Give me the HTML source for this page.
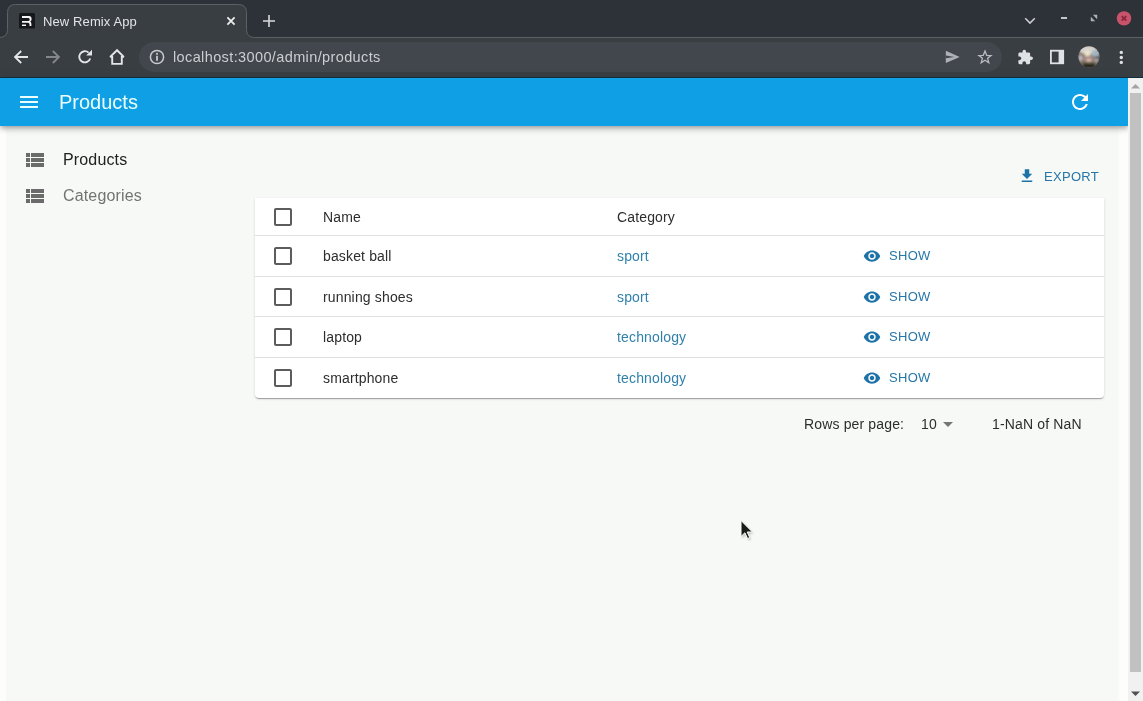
<!DOCTYPE html>
<html><head><meta charset="utf-8">
<style>
*{box-sizing:border-box;margin:0;padding:0}
html,body{-webkit-font-smoothing:antialiased;width:1143px;height:701px;overflow:hidden;background:#f7f9f7;font-family:"Liberation Sans",sans-serif}
.a{position:absolute;will-change:transform}
svg{display:block;overflow:visible}
#tabstrip{left:0;top:0;width:1143px;height:38px;background:#2c3238}
#tab{left:7px;top:4px;width:240px;height:40px;background:#393e43;border:1px solid #5c6166;border-radius:8px 8px 0 0;border-bottom:none}
#toolbar{left:0;top:38px;width:1143px;height:39px;background:#393e43}
#sep{left:0;top:77px;width:1143px;height:1px;background:#12303f}
#omni{left:139px;top:42px;width:863px;height:30px;border-radius:15px;background:#41474c}
.ctext{color:#e3e4e6;font-size:13px;white-space:nowrap}
#appbar{left:0;top:78px;width:1128px;height:48px;background:#0e9fe4;box-shadow:0 2px 4px -1px rgba(0,0,0,.2),0 4px 5px 0 rgba(0,0,0,.14),0 1px 10px 0 rgba(0,0,0,.12)}
#main{left:0;top:78px;width:1128px;height:623px;background:#f7f9f7}
#leftstrip{left:0;top:126px;width:6px;height:575px;background:#fdfdfc}
#rightstrip{left:1117px;top:126px;width:11px;height:575px;background:linear-gradient(90deg,#f7f9f7,#fdfdfc 3px)}
#scroll{left:1128px;top:78px;width:15px;height:623px;background:#f1f1f1}
#thumb{left:1130px;top:93px;width:11px;height:579px;background:#c1c1c1}
.menu{font-size:16px;letter-spacing:.15px;white-space:nowrap}
#card{left:255px;top:198px;width:849px;height:200px;background:#fff;border-radius:0 0 4px 4px;box-shadow:0 2px 1px -1px rgba(0,0,0,.2),0 1px 1px 0 rgba(0,0,0,.14),0 1px 3px 0 rgba(0,0,0,.12)}
.hr{left:255px;width:849px;height:1px;background:#e0e0e0}
.cell{font-size:14px;letter-spacing:.15px;color:#2d2d2d;white-space:nowrap}
.link{font-size:14px;letter-spacing:.15px;color:#3080ac;white-space:nowrap}
.btn{font-size:13px;color:#2576a8;letter-spacing:.3px;white-space:nowrap}
.cb{width:24px;height:24px}
</style></head><body>
<div id="tabstrip" class="a"></div>
<div id="toolbar" class="a"></div>
<svg class="a" style="left:0;top:0" width="1143" height="39" viewBox="0 0 1143 39"><path d="M-1 37.5 Q7.5 37.5 7.5 29.5 V12.5 Q7.5 4.5 15.5 4.5 H238.5 Q246.5 4.5 246.5 12.5 V29.5 Q246.5 37.5 254.5 37.5 H1144 V40 H-1Z" fill="#393e43"/><path d="M-1 37.5 Q7.5 37.5 7.5 29.5 V12.5 Q7.5 4.5 15.5 4.5 H238.5 Q246.5 4.5 246.5 12.5 V29.5 Q246.5 37.5 254.5 37.5 H1144" fill="none" stroke="#5c6166" stroke-width="1"/></svg>
<div id="sep" class="a"></div>
<div id="omni" class="a"></div>
<!-- favicon -->
<svg class="a" style="left:19px;top:13px" width="16" height="16" viewBox="0 0 16 16"><rect x="0" y="0" width="16" height="15.5" rx="1.5" fill="#15171b"/><path d="M3 3H10Q12.6 3 12.6 5.9Q12.6 7.9 11.2 8.6Q12.4 9.3 12.4 11V12.9H10.5V11.2Q10.5 9.7 9 9.7H3V8H9.6Q10.7 8 10.7 6.6Q10.7 4.9 9.5 4.9H3Z M3 11.6H7V13.1H3Z" fill="#f4f4f4"/></svg>
<div class="a ctext" style="left:43px;top:14px;letter-spacing:.11px">New Remix App</div>
<!-- tab close -->
<svg class="a" style="left:225px;top:15px" width="12" height="12" viewBox="0 0 12 12"><path d="M2.4 2.4L9.6 9.6M9.6 2.4L2.4 9.6" stroke="#eceef0" stroke-width="1.8"/></svg>
<!-- new tab plus -->
<svg class="a" style="left:262px;top:14px" width="14" height="14" viewBox="0 0 14 14"><path d="M7 1V13M1 7H13" stroke="#d8dadd" stroke-width="1.6"/></svg>
<!-- window controls -->
<svg class="a" style="left:1024px;top:17px" width="12" height="8" viewBox="0 0 12 8"><path d="M1.2 1.2L6 6L10.8 1.2" fill="none" stroke="#c9cbcf" stroke-width="1.6"/></svg>
<div class="a" style="left:1061px;top:17px;width:6px;height:2px;background:#c4c6ca"></div>
<svg class="a" style="left:1090px;top:14px" width="8" height="8" viewBox="0 0 8 8"><path d="M2.8 0.8H7.2V5.2Z M0.8 2.8V7.2H5.2Z" fill="#aeb1b6"/></svg>
<svg class="a" style="left:1116px;top:11px" width="16" height="16" viewBox="0 0 16 16"><circle cx="8" cy="7.4" r="7.2" fill="#c9536b"/><path d="M5.7 5.1L10.3 9.7M10.3 5.1L5.7 9.7" stroke="#84283b" stroke-width="1.7"/></svg>
<!-- nav icons -->
<svg class="a" style="left:13px;top:49px" width="16" height="16" viewBox="0 0 16 16"><path d="M15 8H2.5M8.2 2L2 8L8.2 14" fill="none" stroke="#e4e6e8" stroke-width="1.8"/></svg>
<svg class="a" style="left:45px;top:49px" width="16" height="16" viewBox="0 0 16 16"><path d="M1 8H13.5M7.8 2L14 8L7.8 14" fill="none" stroke="#84878d" stroke-width="1.8"/></svg>
<svg class="a" style="left:77px;top:49px" width="16" height="16" viewBox="0 0 16 16"><path d="M13.2 9.5A5.6 5.6 0 1 1 11.6 3.6" fill="none" stroke="#e4e6e8" stroke-width="1.9"/><path d="M9.2 6.5H15V0.8Z" fill="#e4e6e8"/></svg>
<svg class="a" style="left:109px;top:48px" width="17" height="17" viewBox="0 0 17 17"><path d="M8 2.2L1.2 8.9H3.2V15.9H12.8V8.9H14.8Z" fill="none" stroke="#e4e6e8" stroke-width="1.9" stroke-linejoin="miter" stroke-miterlimit="2"/></svg>
<!-- info -->
<svg class="a" style="left:149px;top:49px" width="16" height="16" viewBox="0 0 16 16"><circle cx="8" cy="8" r="6.6" fill="none" stroke="#c8cacd" stroke-width="1.5"/><rect x="7.1" y="6.8" width="1.8" height="5" fill="#c8cacd"/><rect x="7.1" y="3.9" width="1.8" height="1.8" fill="#c8cacd"/></svg>
<div class="a ctext" style="left:173px;top:49px;color:#ccced2;font-size:14.5px;letter-spacing:.38px">localhost:3000/admin/products</div>
<!-- send -->
<svg class="a" style="left:944px;top:49px" width="16" height="16" viewBox="0 0 16 16"><path d="M1.8 1.8L15.7 7.9L1.8 14Z" fill="#aeb1b6"/><path d="M1.8 6.5L10.5 7.9L1.8 9.3Z" fill="#41474c"/></svg>
<!-- star -->
<svg class="a" style="left:977px;top:49px" width="16" height="16" viewBox="0 0 16 16"><path d="M8 2.1L9.7 6.3L14.1 6.5L10.6 9.3L11.8 13.7L8 11.2L4.2 13.7L5.4 9.3L1.9 6.5L6.3 6.3Z" fill="none" stroke="#b8bbbf" stroke-width="1.3" stroke-linejoin="miter"/></svg>
<!-- puzzle -->
<svg class="a" style="left:1017.1px;top:49.3px" width="16.6" height="16.6" viewBox="0 0 24 24"><path d="M20.5 11H19V7c0-1.1-.9-2-2-2h-4V3.5C13 2.120 11.88 1 10.5 1S8 2.12 8 3.5V5H4c-1.1 0-1.99.9-1.99 2v3.8H3.5c1.49 0 2.7 1.21 2.7 2.7s-1.21 2.7-2.7 2.7H2V20c0 1.1.9 2 2 2h3.8v-1.5c0-1.49 1.21-2.7 2.7-2.7 1.49 0 2.7 1.21 2.7 2.7V22H17c1.1 0 2-.9 2-2v-4h1.5c1.38 0 2.5-1.12 2.5-2.5S21.88 11 20.5 11z" fill="#dfe1e4"/></svg>
<!-- sidebar -->
<svg class="a" style="left:1049px;top:49px" width="16" height="16" viewBox="0 0 16 16"><rect x="1.9" y="1.7" width="12.3" height="12.6" fill="none" stroke="#e0e2e5" stroke-width="1.8"/><rect x="9.6" y="1.7" width="5.2" height="12.6" fill="#e0e2e5"/></svg>
<!-- avatar -->
<svg class="a" style="left:1078px;top:46px" width="22" height="22" viewBox="0 0 22 22"><defs><clipPath id="avc"><circle cx="11" cy="10.8" r="10.6"/></clipPath><filter id="avb" x="-20%" y="-20%" width="140%" height="140%"><feGaussianBlur stdDeviation="0.9"/></filter></defs><g clip-path="url(#avc)"><rect width="22" height="22" fill="#857366"/><g filter="url(#avb)"><ellipse cx="10" cy="4" rx="9" ry="4.5" fill="#d6d3cf"/><ellipse cx="9.5" cy="7.5" rx="3" ry="3.5" fill="#e8e2c8"/><ellipse cx="17.5" cy="7.5" rx="4" ry="3.5" fill="#a3b5c4"/><rect x="17" y="10.5" width="6" height="1.5" fill="#27313c"/><ellipse cx="2.5" cy="12" rx="2.2" ry="3" fill="#b9b6c2"/><ellipse cx="10" cy="12.5" rx="5" ry="2.5" fill="#a78a84"/><ellipse cx="11" cy="14.3" rx="3" ry="1.2" fill="#e7c4b8"/><ellipse cx="18" cy="14.5" rx="2" ry="2.5" fill="#a2a3a8"/><rect x="2" y="16" width="18" height="2.5" fill="#6f6a55"/><rect x="5" y="17.5" width="12" height="5" fill="#2c281e"/></g></g></svg>
<!-- kebab -->
<svg class="a" style="left:1118px;top:49px" width="6" height="16" viewBox="0 0 6 16"><circle cx="3.3" cy="3.4" r="1.7" fill="#e0e2e5"/><circle cx="3.3" cy="8.5" r="1.7" fill="#e0e2e5"/><circle cx="3.3" cy="13.4" r="1.7" fill="#e0e2e5"/></svg>

<div id="main" class="a"></div>
<div id="leftstrip" class="a"></div>
<div id="rightstrip" class="a"></div>
<div id="appbar" class="a"></div>
<svg class="a" style="left:17px;top:90px" width="24" height="24" viewBox="0 0 24 24"><path d="M3 18h18v-2H3v2zm0-5h18v-2H3v2zm0-7v2h18V6H3z" fill="#ecffff"/></svg>
<div class="a" style="left:58.6px;top:91px;font-size:20px;color:#ecffff;white-space:nowrap">Products</div>
<svg class="a" style="left:1068px;top:90px" width="24" height="24" viewBox="0 0 24 24"><path d="M17.65 6.35C16.2 4.9 14.21 4 12 4c-4.42 0-7.99 3.58-7.99 8s3.57 8 7.99 8c3.73 0 6.84-2.55 7.730-6h-2.08c-.82 2.33-3.04 4-5.65 4-3.31 0-6-2.69-6-6s2.690-6 6-6c1.66 0 3.14.69 4.22 1.78L13 11h7V4l-2.35 2.35z" fill="#fff"/></svg>
<div id="scroll" class="a"></div>
<div id="thumb" class="a"></div>
<svg class="a" style="left:1130px;top:82px" width="11" height="8" viewBox="0 0 11 8"><path d="M1 6.5L5.5 2L10 6.5Z" fill="#a3a3a3"/></svg>
<svg class="a" style="left:1130px;top:690px" width="11" height="8" viewBox="0 0 11 8"><path d="M1 1.5L5.5 6L10 1.5Z" fill="#505050"/></svg>

<svg class="a" style="left:22px;top:148px" width="24" height="24" viewBox="0 0 24 24"><path d="M4 14h4v-4H4v4zm0 5h4v-4H4v4zM4 9h4V5H4v4zm5 5h13v-4H9v4zm0 5h13v-4H9v4zM9 5v4h13V5H9z" fill="#6b6b6b"/></svg>
<svg class="a" style="left:22px;top:184px" width="24" height="24" viewBox="0 0 24 24"><path d="M4 14h4v-4H4v4zm0 5h4v-4H4v4zM4 9h4V5H4v4zm5 5h13v-4H9v4zm0 5h13v-4H9v4zM9 5v4h13V5H9z" fill="#6b6b6b"/></svg>
<div class="a menu" style="left:63px;top:151px;color:#222">Products</div>
<div class="a menu" style="left:63px;top:187px;color:#737373">Categories</div>

<svg class="a" style="left:1018px;top:167px" width="18" height="18" viewBox="0 0 24 24"><path d="M19 9h-4V3H9v6H5l7 7 7-7zM5 18v2h14v-2H5z" fill="#1d72a8"/></svg>
<div class="a btn" style="left:1044px;top:169px">EXPORT</div>

<div id="card" class="a"></div>
<div class="a hr" style="top:235px"></div>
<div class="a hr" style="top:276px"></div>
<div class="a hr" style="top:316px"></div>
<div class="a hr" style="top:357px"></div>

<svg class="a cb" style="left:271px;top:205px" viewBox="0 0 24 24"><path d="M19 5v14H5V5h14m0-2H5c-1.11 0-2 .9-2 2v14c0 1.1.89 2 2 2h14c1.1 0 2-.9 2-2V5c0-1.1-.9-2-2-2z" fill="#5c5c5c"/></svg>
<div class="a cell" style="left:323px;top:209px">Name</div>
<div class="a cell" style="left:617px;top:209px">Category</div>

<svg class="a cb" style="left:271px;top:244px" viewBox="0 0 24 24"><path d="M19 5v14H5V5h14m0-2H5c-1.11 0-2 .9-2 2v14c0 1.1.89 2 2 2h14c1.1 0 2-.9 2-2V5c0-1.1-.9-2-2-2z" fill="#5c5c5c"/></svg>
<div class="a cell" style="left:323px;top:248px">basket ball</div>
<div class="a link" style="left:617px;top:248px">sport</div>
<svg class="a" style="left:863px;top:247px" width="18" height="18" viewBox="0 0 24 24"><path d="M12 4.5C7 4.5 2.73 7.61 1 12c1.73 4.39 6 7.5 11 7.5s9.27-3.11 11-7.5c-1.73-4.390-6-7.5-11-7.5zM12 17c-2.76 0-5-2.24-5-5s2.24-5 5-5 5 2.24 5 5-2.240 5-5 5zm0-8c-1.66 0-3 1.34-3 3s1.34 3 3 3 3-1.34 3-3-1.34-3-3-3z" fill="#1d72a8"/></svg>
<div class="a btn" style="left:889px;top:248px">SHOW</div>

<svg class="a cb" style="left:271px;top:285px" viewBox="0 0 24 24"><path d="M19 5v14H5V5h14m0-2H5c-1.11 0-2 .9-2 2v14c0 1.1.89 2 2 2h14c1.1 0 2-.9 2-2V5c0-1.1-.9-2-2-2z" fill="#5c5c5c"/></svg>
<div class="a cell" style="left:323px;top:289px">running shoes</div>
<div class="a link" style="left:617px;top:289px">sport</div>
<svg class="a" style="left:863px;top:288px" width="18" height="18" viewBox="0 0 24 24"><path d="M12 4.5C7 4.5 2.73 7.61 1 12c1.73 4.39 6 7.5 11 7.5s9.27-3.11 11-7.5c-1.73-4.390-6-7.5-11-7.5zM12 17c-2.76 0-5-2.24-5-5s2.24-5 5-5 5 2.24 5 5-2.240 5-5 5zm0-8c-1.66 0-3 1.34-3 3s1.34 3 3 3 3-1.34 3-3-1.34-3-3-3z" fill="#1d72a8"/></svg>
<div class="a btn" style="left:889px;top:289px">SHOW</div>

<svg class="a cb" style="left:271px;top:325px" viewBox="0 0 24 24"><path d="M19 5v14H5V5h14m0-2H5c-1.11 0-2 .9-2 2v14c0 1.1.89 2 2 2h14c1.1 0 2-.9 2-2V5c0-1.1-.9-2-2-2z" fill="#5c5c5c"/></svg>
<div class="a cell" style="left:323px;top:329px">laptop</div>
<div class="a link" style="left:617px;top:329px">technology</div>
<svg class="a" style="left:863px;top:328px" width="18" height="18" viewBox="0 0 24 24"><path d="M12 4.5C7 4.5 2.73 7.61 1 12c1.73 4.39 6 7.5 11 7.5s9.27-3.11 11-7.5c-1.73-4.390-6-7.5-11-7.5zM12 17c-2.76 0-5-2.24-5-5s2.24-5 5-5 5 2.24 5 5-2.240 5-5 5zm0-8c-1.66 0-3 1.34-3 3s1.34 3 3 3 3-1.34 3-3-1.34-3-3-3z" fill="#1d72a8"/></svg>
<div class="a btn" style="left:889px;top:329px">SHOW</div>

<svg class="a cb" style="left:271px;top:366px" viewBox="0 0 24 24"><path d="M19 5v14H5V5h14m0-2H5c-1.11 0-2 .9-2 2v14c0 1.1.89 2 2 2h14c1.1 0 2-.9 2-2V5c0-1.1-.9-2-2-2z" fill="#5c5c5c"/></svg>
<div class="a cell" style="left:323px;top:370px">smartphone</div>
<div class="a link" style="left:617px;top:370px">technology</div>
<svg class="a" style="left:863px;top:369px" width="18" height="18" viewBox="0 0 24 24"><path d="M12 4.5C7 4.5 2.73 7.61 1 12c1.73 4.39 6 7.5 11 7.5s9.27-3.11 11-7.5c-1.73-4.390-6-7.5-11-7.5zM12 17c-2.76 0-5-2.24-5-5s2.24-5 5-5 5 2.24 5 5-2.240 5-5 5zm0-8c-1.66 0-3 1.34-3 3s1.34 3 3 3 3-1.34 3-3-1.34-3-3-3z" fill="#1d72a8"/></svg>
<div class="a btn" style="left:889px;top:370px">SHOW</div>

<div class="a cell" style="left:804px;top:416px">Rows per page:</div>
<div class="a cell" style="left:921px;top:416px">10</div>
<svg class="a" style="left:936px;top:412px" width="24" height="24" viewBox="0 0 24 24"><path d="M7 10l5 5 5-5z" fill="#757575"/></svg>
<div class="a cell" style="left:992px;top:416px">1-NaN of NaN</div>

<!-- cursor -->
<svg class="a" style="left:739px;top:519px" width="18" height="24" viewBox="0 0 18 24"><defs><filter id="csh" x="-50%" y="-50%" width="200%" height="200%"><feGaussianBlur stdDeviation="1"/></filter></defs><path d="M2.5 2.5V18.5L6.4 14.8L9.1 20.6L11.3 19.6L8.7 14H13.9Z" fill="#000" opacity=".25" filter="url(#csh)" transform="translate(.6 .8)"/><path d="M2 1.5V17.5L5.9 13.8L8.6 19.6L10.8 18.6L8.2 13H13.4Z" fill="#1b1b1b" stroke="#fff" stroke-width="1"/></svg>
</body></html>
